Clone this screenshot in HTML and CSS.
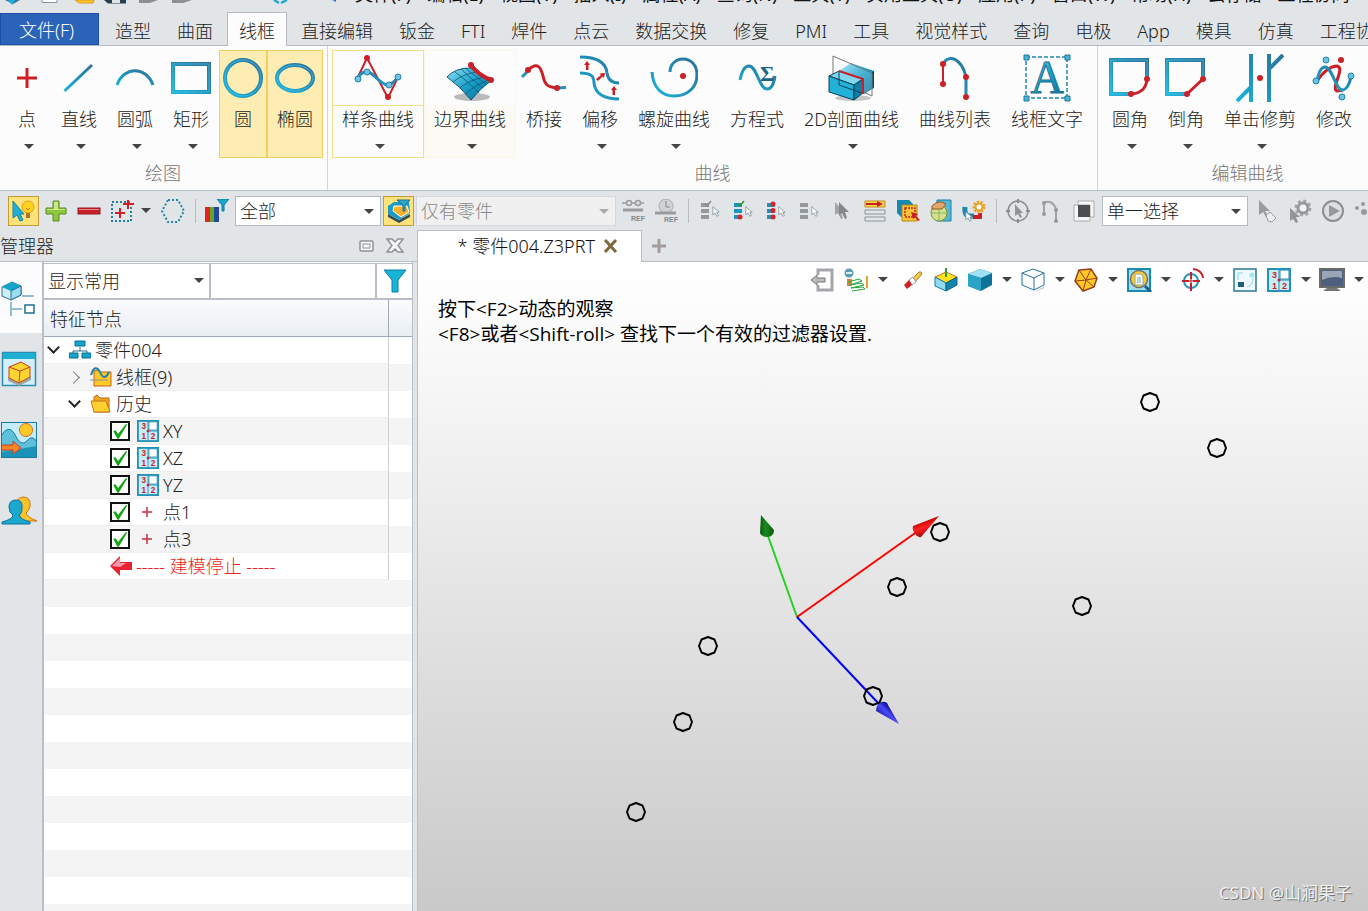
FILE: index.html
```html
<!DOCTYPE html>
<html lang="zh-CN">
<head>
  <meta charset="UTF-8">
  <meta name="viewport" content="width=device-width, initial-scale=1.0">
  <title>零件004.Z3PRT</title>
  <link rel="stylesheet" href="styles.css">
</head>
<body>
  <!-- shared gradients and symbols -->
  <svg class="defs" aria-hidden="true">
    <defs>
      <linearGradient id="tube" x1="0" y1="1" x2="1" y2="0">
        <stop offset="0" stop-color="#1cb4dc"/>
        <stop offset="0.5" stop-color="#1f8fb8"/>
        <stop offset="1" stop-color="#2f7299"/>
      </linearGradient>
      <linearGradient id="cyan" x1="0" y1="0" x2="1" y2="1">
        <stop offset="0" stop-color="#8fe0f5"/>
        <stop offset="0.5" stop-color="#1aa0c8"/>
        <stop offset="1" stop-color="#0b6a92"/>
      </linearGradient>
      <symbol id="datum" viewBox="0 0 24 24">
        <rect x="1" y="1" width="22" height="22" fill="#c5ecf7" stroke="#2590b8" stroke-width="2"/>
        <path d="M12 1V12H23M12 12V23" fill="none" stroke="#2590b8" stroke-width="1"/>
        <rect x="13" y="2" width="9" height="9" fill="#fff" stroke="#2590b8"/>
        <circle cx="12" cy="12" r="1.500" fill="#cc1f26"/>
        <text x="5" y="10" class="digit">3</text>
        <text x="5" y="21" class="digit">1</text>
        <text x="15" y="21" class="digit">2</text>
      </symbol>
      <symbol id="cursor" viewBox="0 0 10 14">
        <path d="M1 1V11L4 9L6 13L8 12L6 8H9Z"/>
      </symbol>
      <symbol id="funnel" viewBox="0 0 24 24">
        <path d="M1 1H23L15 11V23H9V11Z" fill="#17b4d8" stroke="#0b7ca5"/>
      </symbol>
    </defs>
  </svg>

  <nav class="menubar">
    <svg class="quick" width="355" height="6" viewBox="0 0 355 6">
      <path d="M5 0H20L13 4Z" fill="#3a6f9c"/><path d="M8 0H15L12 5Z" fill="#16b0dc"/>
      <path d="M42 0V2.500H57V0" fill="#fff" stroke="#7d95ad"/>
      <path d="M75 0L79 3H93L94 0Z" fill="#ffc928" stroke="#d89a1c"/>
      <path d="M104 0L108 3.500H126V0Z" fill="#24404f"/><path d="M112 0H120V3H112Z" fill="#dfe6ea"/>
      <path d="M139 0V3H150L158 0Z" fill="#8d9093"/>
      <path d="M172 0V3H183L192 0Z" fill="#8d9093"/>
      <path d="M274 0L279 3M281 3L287 0" stroke="#22a8cf" stroke-width="2.500"/>
      <path d="M332 0L336 2V0Z" fill="#3c78c8"/>
    </svg>
    <a href="#">文件(F)</a><a href="#">编辑(E)</a><a href="#">视图(V)</a><a href="#">插入(I)</a><a href="#">属性(A)</a><a href="#">查询(N)</a><a href="#">工具(T)</a><a href="#">实用工具(U)</a><a href="#">应用(P)</a><a href="#">窗口(W)</a><a href="#">帮助(H)</a><a href="#">云存储</a><a href="#">工程协同</a>
  </nav>

  <nav class="tabs">
    <button class="tab file">文件(F)</button>
    <button class="tab">造型</button>
    <button class="tab">曲面</button>
    <button class="tab active">线框</button>
    <button class="tab">直接编辑</button>
    <button class="tab">钣金</button>
    <button class="tab">FTI</button>
    <button class="tab">焊件</button>
    <button class="tab">点云</button>
    <button class="tab">数据交换</button>
    <button class="tab">修复</button>
    <button class="tab">PMI</button>
    <button class="tab">工具</button>
    <button class="tab">视觉样式</button>
    <button class="tab">查询</button>
    <button class="tab">电极</button>
    <button class="tab">App</button>
    <button class="tab">模具</button>
    <button class="tab">仿真</button>
    <button class="tab">工程协同</button>
  </nav>

  <div class="ribbon">
    <section class="group">
      <div class="tools">
        <button class="tool drop">
          <svg viewBox="0 0 48 48"><path class="red" d="M24 14V34M14 24H34"/></svg>
          <span>点</span>
        </button>
        <button class="tool drop">
          <svg viewBox="0 0 48 48"><path class="tube thin" d="M9.500 37L37 11"/></svg>
          <span>直线</span>
        </button>
        <button class="tool drop">
          <svg viewBox="0 0 48 48"><path class="tube thin" d="M6 31C13 12 35 12 42 31"/></svg>
          <span>圆弧</span>
        </button>
        <button class="tool drop">
          <svg viewBox="0 0 48 48"><rect class="tube" x="6" y="10" width="36" height="28"/><rect class="shine" x="6" y="10" width="36" height="28"/></svg>
          <span>矩形</span>
        </button>
        <button class="tool on">
          <svg viewBox="0 0 48 48"><circle class="tube" cx="24" cy="24" r="18"/><circle class="shine" cx="24" cy="24" r="18"/></svg>
          <span>圆</span>
        </button>
        <button class="tool on">
          <svg viewBox="0 0 48 48"><ellipse class="tube" cx="24" cy="24" rx="18" ry="13"/><ellipse class="shine" cx="24" cy="24" rx="18" ry="13"/></svg>
          <span>椭圆</span>
        </button>
      </div>
      <h2>绘图</h2>
    </section>

    <section class="group">
      <div class="tools">
        <button class="tool drop split">
          <svg viewBox="0 0 48 48">
            <path class="red thin" d="M3 25L13 4L34 44L44 23"/>
            <circle class="dot" cx="13" cy="4" r="3"/><circle class="dot" cx="34" cy="43" r="3"/>
            <path class="tube thin" d="M3 25C8 17 13 16 18 20C25 26 32 34 37 30C41 27 42 26 44 23"/>
            <circle class="bead" cx="4" cy="25" r="3"/><circle class="bead" cx="13" cy="18" r="3"/>
            <circle class="bead" cx="35" cy="31" r="3"/><circle class="bead" cx="44" cy="23" r="3"/>
          </svg>
          <span>样条曲线</span>
        </button>
        <button class="tool drop soft">
          <svg viewBox="0 0 48 48">
            <ellipse cx="26" cy="43" rx="18" ry="4" fill="#b9bcbe"/>
            <path d="M1 23Q9 14 24 14L45 27Q36 33 25 46Q14 32 1 23Z" fill="url(#cyan)" stroke="#0b5878"/>
            <path d="M7 28Q17 20 31 18M13 34Q24 26 37 23M19 40Q29 31 42 26M9 18Q18 24 33 39M15 15Q24 24 37 34M19 14Q29 22 41 31" fill="none" stroke="#0b5878" stroke-width="0.800"/>
            <path class="red wide" d="M25 11Q32 21 45 26"/>
            <circle class="dot" cx="25" cy="11" r="3"/><circle class="dot" cx="45" cy="26" r="3"/>
          </svg>
          <span>边界曲线</span>
        </button>
        <button class="tool">
          <svg viewBox="0 0 48 48">
            <path class="tube thin" d="M2 23L8 17M37 34L46 33.500"/>
            <path class="red" d="M8 16C18 7 21 14 23 22C25 32 29 33 37 34"/>
            <circle class="dot" cx="8" cy="16" r="3"/><circle class="dot" cx="37" cy="34" r="3"/>
          </svg>
          <span>桥接</span>
        </button>
        <button class="tool drop">
          <svg viewBox="0 0 48 48">
            <path class="tube thin" d="M4 3C22 3 30 9 31 19C32 26 36 29 43 29M4 19C15 19 18 22 18 29C19 40 29 45 43 45"/>
            <path d="M11 7L14 11H12.500V16H10V11H8ZM38 32L41 36H39V41H36.500V36H35ZM29 19L28 24L26.500 22.500L22 27L20 25L25 21L23.500 19.500Z" fill="#cc2027"/>
          </svg>
          <span>偏移</span>
        </button>
        <button class="tool drop">
          <svg viewBox="0 0 48 48">
            <path class="tube thin" d="M2 18C3 34 12 42 24 42C38 42 47 33 47 21C47 11 41 5 33 5C26 5 20 10 20 18"/>
            <circle class="dot" cx="33" cy="22" r="3"/>
          </svg>
          <span>螺旋曲线</span>
        </button>
        <button class="tool">
          <svg viewBox="0 0 48 48">
            <path class="tube thin" d="M7 26C9 16 12 12 16 12C24 12 26 35 34 35C39 35 41 29 42 22"/>
            <text x="27" y="27" class="sigma">Σ</text>
          </svg>
          <span>方程式</span>
        </button>
        <button class="tool drop">
          <svg viewBox="0 0 48 48">
            <ellipse cx="25" cy="44" rx="18" ry="3" fill="#c4c6c8"/>
            <path d="M11 17L23 9L46 17V34L36 40L11 32Z" fill="url(#cyan)"/>
            <path d="M44 18L46 17V33L44 34Z" fill="#064766"/>
            <path d="M5 2L44 19V42L5 24Z" fill="#fff" fill-opacity="0.200" stroke="#777"/>
            <path d="M1 22L11 17L35 25L26 31Z" fill="#7fd6ee" stroke="#0b3f56"/>
            <path d="M1 22L26 31V46L1 38Z" fill="#22b2d8" stroke="#0b3f56"/>
            <path d="M26 31L35 25V39L26 46Z" fill="#0d7fa8" stroke="#0b3f56"/>
            <path d="M11 18V31L34 39" fill="none" stroke="#0b3f56"/>
            <path class="red thin" d="M11 17L35 25V40"/>
          </svg>
          <span>2D剖面曲线</span>
        </button>
        <button class="tool">
          <svg viewBox="0 0 48 48">
            <path class="tube thin" d="M12 10C18 -1 31 5 35 23V42"/>
            <path class="red thin" d="M12 10V30"/>
            <circle class="dot" cx="12" cy="10" r="3"/><circle class="dot" cx="12" cy="30" r="3"/>
            <circle class="dot" cx="35" cy="23" r="3"/><circle class="dot" cx="35" cy="43" r="3"/>
          </svg>
          <span>曲线列表</span>
        </button>
        <button class="tool">
          <svg viewBox="0 0 48 48">
            <rect x="3" y="3" width="41" height="41" fill="none" stroke="#1f86ad" stroke-width="1.500" stroke-dasharray="4 2"/>
            <path d="M1 1H6V6H1ZM42 1H47V6H42ZM1 42H6V47H1ZM42 42H47V47H42Z" fill="#49b4d6" stroke="#1b789c"/>
            <text x="24" y="39" class="letter">A</text>
          </svg>
          <span>线框文字</span>
        </button>
      </div>
      <h2>曲线</h2>
    </section>

    <section class="group last">
      <div class="tools">
        <button class="tool drop">
          <svg viewBox="0 0 48 48">
            <path class="tube" d="M41 25V6H5V40H25"/><path class="shine" d="M41 25V6H5V40H25"/><path class="red" d="M41 25Q40 39 25 40"/>
            <circle class="dot" cx="41" cy="25" r="3"/><circle class="dot" cx="25" cy="40" r="3"/>
          </svg>
          <span>圆角</span>
        </button>
        <button class="tool drop">
          <svg viewBox="0 0 48 48">
            <path class="tube" d="M41 25V6H5V40H25"/><path class="shine" d="M41 25V6H5V40H25"/><path class="red" d="M41 25L25 40"/>
            <circle class="dot" cx="41" cy="25" r="3"/><circle class="dot" cx="25" cy="40" r="3"/>
          </svg>
          <span>倒角</span>
        </button>
        <button class="tool drop">
          <svg viewBox="0 0 48 48">
            <path class="tube" d="M15 0V48M33 0V48M1 47L14 34M34 14L47 1"/>
            <circle class="dot" cx="24" cy="24" r="3"/>
          </svg>
          <span>单击修剪</span>
        </button>
        <button class="tool">
          <svg viewBox="0 0 48 48">
            <path class="red" d="M7 27C14 17 21 12 27 12C36 14 20 34 27 37L33 36"/>
            <path class="tube thin" d="M7 27C9 16 12 13 15 13C22 13 26 36 32 36C37 36 40 29 41 22"/>
            <circle class="bead" cx="6" cy="27" r="3"/><circle class="bead" cx="41" cy="22" r="3"/>
            <circle class="bead" cx="16" cy="6" r="3"/><circle class="bead" cx="32" cy="43" r="3"/>
            <circle class="dot" cx="31" cy="6" r="3"/>
          </svg>
          <span>修改</span>
        </button>
      </div>
      <h2>编辑曲线</h2>
    </section>
  </div>

  <div class="toolbar">
    <button class="pick on" aria-label="提示">
      <svg viewBox="0 0 24 24"><circle cx="16" cy="8" r="6" fill="#ffd21e" stroke="#e09a1a"/><path d="M14 14H18V19H14Z" fill="#a8752a"/><path d="M14 9L16 11L18 9" fill="none" stroke="#a8752a"/><path d="M1 2V19L5 16L8 22L11 21L8 15H12Z" fill="#1fb0d4" stroke="#1583a6"/></svg>
    </button>
    <button class="pick" aria-label="添加">
      <svg viewBox="0 0 24 24"><path d="M9 2H15V9H22V15H15V22H9V15H2V9H9Z" fill="#8cc63a" stroke="#5c8a22"/><path d="M10 3H14V10H21V11H3V10H10Z" fill="#c9e88e"/></svg>
    </button>
    <button class="pick" aria-label="移除">
      <svg viewBox="0 0 24 24"><rect x="1" y="9" width="22" height="6" fill="#c8202a" stroke="#9b1a20"/><path d="M2 10.500H22" stroke="#f08a8a"/></svg>
    </button>
    <button class="pick" aria-label="框选">
      <svg viewBox="0 0 24 24"><rect x="2" y="3" width="19" height="19" fill="none" stroke="#1f7fa5" stroke-width="2" stroke-dasharray="2 2"/><path class="red thin" d="M10 9V19M5 14H15M18 1V10M13 5H24"/></svg>
    </button>
    <i class="caret wide"></i>
    <button class="pick gap" aria-label="多边形">
      <svg viewBox="0 0 24 24"><path d="M7 1H17L23 12L17 23H7L1 12Z" fill="none" stroke="#1f86a8" stroke-width="2" stroke-dasharray="2 2"/></svg>
    </button>
    <i class="sep"></i>
    <button class="pick" aria-label="颜色过滤">
      <svg viewBox="0 0 24 24"><path d="M0 8H5V23H0Z" fill="#e8211d"/><path d="M5 8H9V23H5Z" fill="#5fa82c"/><path d="M9 8H14V23H9Z" fill="#25479a"/><path d="M12 0H24L19 6V12H17V6Z" fill="#1aa6cc" stroke="#0b7ca5"/></svg>
    </button>
    <label class="combo"><select aria-label="过滤器"><option>全部</option></select></label>
    <button class="pick on" aria-label="范围">
      <svg viewBox="0 0 24 24"><path d="M1 15L12 21L23 15V18L12 24L1 18Z" fill="#3a4a58"/><path d="M1 7L7 3H22L23 14L12 21L1 15Z" fill="#1b9cc4"/><path d="M7 7H20L22 13L14 18L6 12Z" fill="#ffb32a" stroke="#fff"/><path d="M10 1H23L18 6V12H16V6Z" fill="#2fa8cc" stroke="#156c90"/></svg>
    </button>
    <label class="combo long"><select aria-label="范围" disabled><option>仅有零件</option></select></label>
    <button class="pick" aria-label="参考">
      <svg viewBox="0 0 24 24"><g fill="none" stroke="#999c9f" stroke-width="1.500"><path d="M1 4H5M11 4H14M20 4H23"/><circle cx="8" cy="4" r="2.500"/><circle cx="17" cy="4" r="2.500"/></g><path d="M2 11H22" stroke="#999c9f" stroke-width="3"/><text x="10" y="22" class="ref">REF</text></svg>
    </button>
    <button class="pick" aria-label="历史参考">
      <svg viewBox="0 0 24 24"><circle cx="12" cy="7" r="7" fill="#d0d2d4" stroke="#aaadb0"/><path d="M12 2V8H16" fill="none" stroke="#888"/><path d="M1 14H22" stroke="#999c9f" stroke-width="3"/><text x="10" y="23" class="ref">REF</text></svg>
    </button>
    <i class="sep"></i>
    <button class="pick" aria-label="全部不选"><svg viewBox="0 0 24 24"><path d="M3 4H11V8H3ZM3 10H11V14H3ZM3 16H11V20H3Z" fill="#96999c"/><path d="M7 5L9 7L13 2" fill="none" stroke="#888" stroke-width="1.500"/><use href="#cursor" x="14" y="6" width="8" height="13" class="arrow"/></svg></button>
    <button class="pick" aria-label="选择可见"><svg viewBox="0 0 24 24"><path d="M3 4H11V8H3ZM3 10H11V14H3ZM3 16H11V20H3Z" fill="#1c93ba"/><path d="M7 5L9 7L13 2" fill="none" stroke="#2f9b2f" stroke-width="1.500"/><circle cx="9" cy="18" r="2.500" fill="#d8232a"/><use href="#cursor" x="14" y="6" width="8" height="13" class="arrow"/></svg></button>
    <button class="pick" aria-label="排除"><svg viewBox="0 0 24 24"><path d="M3 4H11V8H3ZM3 10H11V14H3ZM3 16H11V20H3Z" fill="#1c93ba"/><circle cx="9" cy="5" r="2.500" fill="#d8232a"/><circle cx="9" cy="11.500" r="2.500" fill="#d8232a"/><circle cx="9" cy="18" r="2.500" fill="#d8232a"/><use href="#cursor" x="14" y="6" width="8" height="13" class="arrow"/></svg></button>
    <button class="pick" aria-label="列表"><svg viewBox="0 0 24 24"><path d="M3 4H11V8H3ZM3 10H11V14H3ZM3 16H11V20H3Z" fill="#96999c"/><use href="#cursor" x="14" y="6" width="8" height="13" class="arrow"/></svg></button>
    <button class="pick" aria-label="多选"><svg viewBox="0 0 24 24"><path d="M5 3V16L8 14L11 20L13 19L11 13H14Z" fill="#a2a5a8"/><path d="M9 3V16L12 14L15 20L17 19L15 13H19Z" fill="#85888b"/></svg></button>
    <button class="pick" aria-label="最后">
      <svg viewBox="0 0 24 24"><path d="M2 2H22V8H2Z" fill="#ffd84a" stroke="#c08c1c"/><path d="M3 4H14V2L20 5L14 8V6H3Z" fill="#c8202a"/><path d="M2 11H22V15H2ZM2 18H22V22H2Z" fill="#e2e6ea" stroke="#8a9299"/></svg>
    </button>
    <button class="pick" aria-label="窗选">
      <svg viewBox="0 0 24 24"><path d="M1 1H13L17 5V18H5L1 14Z" fill="#1588b0"/><path d="M6 6H21V22H6Z" fill="#ffc435" stroke="#b9851b"/><rect x="9" y="9" width="10" height="9" fill="none" stroke="#c8202a" stroke-width="1.500" stroke-dasharray="2 1"/><path d="M15 13L22 15L20 17L24 21L22 22L19 18L17 20Z" fill="#c8202a"/></svg>
    </button>
    <button class="pick" aria-label="面片">
      <svg viewBox="0 0 24 24"><path d="M8 1H22V22H8Z" fill="#56b8d6" stroke="#1d7fa3"/><circle cx="10" cy="14" r="8" fill="#d5e08c" stroke="#7f8f35"/><path d="M3 7Q10 0 17 5L13 10L3 10Z" fill="#e5a869" stroke="#8a5a2a"/><path d="M10 10V22M2 14H18" stroke="#7fb86a"/></svg>
    </button>
    <button class="pick" aria-label="选择设置">
      <svg viewBox="0 0 24 24"><path d="M3 8Q2 18 9 17H12" fill="none" stroke="#1c86ac" stroke-width="5"/><path d="M11 18H18V14" fill="none" stroke="#c8202a" stroke-width="4"/><circle cx="17" cy="8" r="5" fill="none" stroke="#e8a020" stroke-width="3" stroke-dasharray="2 1.500"/><circle cx="17" cy="8" r="3.500" fill="#fff" stroke="#e8a020" stroke-width="2"/><use href="#cursor" x="3" y="11" width="8" height="13" class="arrow"/></svg>
    </button>
    <i class="sep"></i>
    <button class="pick" aria-label="圆形选择">
      <svg viewBox="0 0 24 24"><circle cx="12" cy="12" r="10" fill="none" stroke="#8b8e91" stroke-width="1.500"/><path d="M12 0V4M12 20V24M0 12H4M20 12H24" stroke="#8b8e91" stroke-width="2"/><path d="M9 5V17L12 15L14 19L16 18L14 14H17Z" fill="#929598"/></svg>
    </button>
    <button class="pick" aria-label="曲线链">
      <svg viewBox="0 0 24 24"><path d="M5 15V4Q13 0 17 10V22" fill="none" stroke="#a1a4a7" stroke-width="2"/><circle cx="5" cy="15" r="2"/><circle cx="5" cy="4" r="2"/><circle cx="17" cy="11" r="2"/><circle cx="17" cy="22" r="2"/></svg>
    </button>
    <button class="pick" aria-label="反选">
      <svg viewBox="0 0 24 24"><path d="M6 2H22V18H6Z" fill="#f6f6f6" stroke="#aaa"/><path d="M2 6H18V22H2Z" fill="#f6f6f6" stroke="#aaa"/><path d="M6 6H18V18H6Z" fill="#4b4d4f"/></svg>
    </button>
    <label class="combo"><select aria-label="选择方式"><option>单一选择</option></select></label>
    <button class="pick" aria-label="标签选择">
      <svg viewBox="0 0 24 24"><path d="M4 1V16L8 13L11 18L13 17L10 12H15Z" fill="#999c9f"/><path d="M11 16L15 13L21 19L17 23L13 22Z" fill="#eee" stroke="#999"/></svg>
    </button>
    <button class="pick" aria-label="设置">
      <svg viewBox="0 0 24 24"><circle cx="15" cy="9" r="7" fill="none" stroke="#a5a8ab" stroke-width="3" stroke-dasharray="3 2.500"/><circle cx="15" cy="9" r="5" fill="#f2f2f2" stroke="#96999c" stroke-width="3"/><path d="M2 9V22L5 20L8 24L10 23L8 18H12Z" fill="#929598"/></svg>
    </button>
    <button class="pick" aria-label="播放">
      <svg viewBox="0 0 24 24"><circle cx="12" cy="12" r="10" fill="#dcdfe1" stroke="#8b8e91" stroke-width="2"/><path d="M8 6L19 12L8 18Z" fill="#96999c"/></svg>
    </button>
    <button class="pick" aria-label="更多">
      <svg viewBox="0 0 24 24"><circle cx="3" cy="9" r="2"/><circle cx="9" cy="5" r="2"/><circle cx="10" cy="13" r="3"/><circle cx="16" cy="9" r="2"/></svg>
    </button>
  </div>

  <main class="work">
    <aside class="manager">
      <header class="manager-head">
        <h1>管理器</h1>
        <button aria-label="浮动"><svg width="15" height="12" viewBox="0 0 15 12"><rect x="1" y="1" width="13" height="10" rx="1" fill="#f6f7f8" stroke="#8f9397" stroke-width="1.500"/><rect x="4" y="4" width="7" height="4" fill="none" stroke="#8f9397"/></svg></button>
        <button aria-label="关闭管理器"><svg width="18" height="15" viewBox="0 0 18 15"><path d="M1 1H6L9 4L12 1H17L12 7.500L17 14H12L9 11L6 14H1L6 7.500Z" fill="#f8f9fa" stroke="#8f9397" stroke-width="1.500"/></svg></button>
      </header>
      <div class="manager-body">
        <nav class="side">
          <button class="side-tab active" aria-label="历史管理">
            <svg viewBox="0 0 36 36"><path d="M1 7L11 2L20 6V15L10 20L1 16Z" fill="#cdeef8" stroke="#2a6f94"/><path d="M1 7L11 2L20 6L10 11Z" fill="#15a3c8"/><path d="M10 11L20 6V15L10 20Z" fill="#9bdcf0" stroke="#2a6f94"/><path d="M21 16H33M10 22V36M11 29H21" stroke="#2e7f9f" fill="none"/><rect x="24" y="25" width="9" height="8" fill="#fff" stroke="#1c6f92" stroke-width="1.500"/></svg>
          </button>
          <button class="side-tab" aria-label="装配管理">
            <svg viewBox="0 0 36 36"><rect x="1.500" y="1.500" width="33" height="33" fill="#d5effa" stroke="#2b8db1" stroke-width="1.500"/><path d="M2 2H34V8H2Z" fill="#1fb0d4"/><path d="M7 26L18 32L30 25V29L18 35L7 30Z" fill="#9aa"/><path d="M8 16L20 11L29 16V26L18 32L8 27Z" fill="#ffd52e" stroke="#c8401c"/><path d="M8 16L19 20L29 16M19 20L18 32" fill="none" stroke="#c8401c"/></svg>
          </button>
          <button class="side-tab" aria-label="视图管理">
            <svg viewBox="0 0 36 36"><rect width="36" height="36" fill="#c4ecf8"/><path d="M0 14Q7 2 13 11Q20 26 26 19Q31 12 36 20V36H0Z" fill="#5fc0dc"/><path d="M0 30L36 24V36H0Z" fill="#1c94ba"/><path d="M0 14Q7 2 13 11Q20 26 26 19Q31 12 36 20" fill="none" stroke="#1c7a9e"/><circle cx="25" cy="8" r="6.500" fill="#ffc928" stroke="#e06a1c"/><path d="M0 23H12V19L20 26L12 32V28H0Z" fill="#f8852a" stroke="#c8401c"/><rect x="0.500" y="0.500" width="35" height="35" fill="none" stroke="#1c7a9e"/></svg>
          </button>
          <button class="side-tab" aria-label="角色管理">
            <svg viewBox="0 0 36 36"><path d="M22 4Q30 4 29 13Q28 18 25 20Q26 24 36 28H22L14 16Q14 5 22 4Z" fill="#ffc22a" stroke="#c8741c"/><path d="M15 7Q22 7 21 15Q21 21 18 22Q19 26 29 29V31H1V29Q12 26 12 22Q8 20 8 14Q8 7 15 7Z" fill="#1aa8cf" stroke="#0e7498"/></svg>
          </button>
        </nav>
        <div class="panel">
          <div class="filter">
            <label class="combo flat"><select aria-label="显示"><option>显示常用</option></select></label>
            <input type="text" aria-label="搜索">
            <button aria-label="过滤"><svg width="24" height="24"><use href="#funnel"/></svg></button>
          </div>
          <div class="tree-head"><span>特征节点</span></div>
          <ul class="tree">
            <li><div class="node"><i class="chev open"></i><svg viewBox="0 0 22 22"><path d="M11 8V12M4 15V12H18V15" fill="none" stroke="#2a6f8c"/><path d="M6 2H16V7H6ZM0 14H9V19H0ZM13 14H22V19H13Z" fill="#12a5cc" stroke="#0e6f90"/></svg>零件004</div></li>
            <li><div class="node level-1"><i class="chev"></i><svg viewBox="0 0 22 22"><path d="M4 5L8 4L10 6H21V20H4Z" fill="#ffc928" stroke="#c8641c"/><path d="M1 9Q5 -3 10 6Q14 16 19 6" fill="none" stroke="#2380a6" stroke-width="2"/><path d="M0 14H18" stroke="#8a8f94"/></svg>线框(9)</div></li>
            <li><div class="node level-1"><i class="chev open"></i><svg viewBox="0 0 22 22"><path d="M4 19V4L7 2L10 5H19V19Z" fill="#f5a81c" stroke="#b8641c"/><path d="M1 8H16L20 19H4Z" fill="#ffd02e" stroke="#c8741c"/></svg>历史</div></li>
            <li><label class="node level-2"><input type="checkbox" checked><svg viewBox="0 0 24 24"><use href="#datum"/></svg>XY</label></li>
            <li><label class="node level-2"><input type="checkbox" checked><svg viewBox="0 0 24 24"><use href="#datum"/></svg>XZ</label></li>
            <li><label class="node level-2"><input type="checkbox" checked><svg viewBox="0 0 24 24"><use href="#datum"/></svg>YZ</label></li>
            <li><label class="node level-2"><input type="checkbox" checked><svg viewBox="0 0 22 22"><path d="M10 6V16M5 11H15" stroke="#c8323a" stroke-width="1.500"/></svg>点1</label></li>
            <li><label class="node level-2"><input type="checkbox" checked><svg viewBox="0 0 22 22"><path d="M10 6V16M5 11H15" stroke="#c8323a" stroke-width="1.500"/></svg>点3</label></li>
            <li><div class="node level-2 stop"><svg viewBox="0 0 22 22"><path d="M0 11L10 1V7H22V15H10V21Z" fill="#e8232f"/><path d="M2 11L10 3V8H16L10 12Z" fill="#f79ab0"/></svg>----- 建模停止 -----</div></li>
          </ul>
        </div>
      </div>
    </aside>

    <section class="document">
      <div class="doc-tabs">
        <div class="doc-tab">
          <span>* 零件004.Z3PRT</span>
          <button aria-label="关闭"><svg width="16" height="14" viewBox="0 0 16 14"><path d="M2 1L13 13M13 1L2 13" stroke="#7d6a3a" stroke-width="3"/></svg></button>
        </div>
        <button aria-label="新建"><svg width="16" height="16" viewBox="0 0 16 16"><path d="M8 1V15M1 8H15" stroke="#a49c9c" stroke-width="3"/></svg></button>
      </div>

      <div class="viewport">
        <div class="view-tools">
          <div class="view-set">
            <button aria-label="退出"><svg viewBox="0 0 24 24"><path d="M8 7V2H22V22H8V17" fill="none" stroke="#a4a7aa" stroke-width="3"/><path d="M1 12L7 7V10H15V14H7V17Z" fill="#bbb" stroke="#777"/></svg></button>
            <button aria-label="漫游"><svg viewBox="0 0 24 24"><circle cx="5" cy="5" r="4.500" fill="#5a9cb5"/><path d="M2 4H8V6H2Z" fill="#dfeef4"/><path d="M3 11H8V18H3Z" fill="#e0803a"/><path d="M4 14L15 11L18 13L6 17L17 15L20 17L7 20L19 19L21 21L8 23" fill="none" stroke="#20a83a" stroke-width="1"/><path d="M23 8V20" stroke="#e8a12a" stroke-width="2"/></svg></button>
            <i class="caret wide"></i>
          </div>
          <button aria-label="擦除"><svg viewBox="0 0 24 24"><path d="M13 10L19 4H21L22 6L15 14Z" fill="#f5c94a" stroke="#a8812a"/><path d="M9 12L13 9L16 14L12 17Z" fill="#fff" stroke="#999"/><path d="M4 17L9 12L12 17L7 21Z" fill="#c8242a"/></svg></button>
          <button aria-label="定向"><svg viewBox="0 0 24 24"><path d="M1 9L12 4L23 9L12 15Z" fill="#ffe11e" stroke="#c87a1c"/><path d="M1 9L12 15V23L1 18Z" fill="#8fdcf0" stroke="#1c7a9e"/><path d="M12 15L23 9V17L12 23Z" fill="#1583aa" stroke="#0e6484"/><path d="M12 0V9" stroke="#2f9b2f" stroke-width="2"/></svg></button>
          <button aria-label="着色"><svg viewBox="0 0 24 24"><path d="M0 6L12 1L24 5V17L13 23L0 18Z" fill="#0f7399"/><path d="M0 6L12 1L24 5L13 10Z" fill="#9fe0f2"/><path d="M0 6L13 10V23L0 18Z" fill="#2ba3c9"/></svg></button><i class="caret wide"></i>
          <button aria-label="线框显示"><svg viewBox="0 0 24 24"><path d="M5 19L13 24L23 19V20L13 24Z" fill="#aaa"/><path d="M1 5L12 1L23 5V17L13 22L1 17ZM1 5L13 10L23 5M13 10V22" fill="#fff" stroke="#23739a"/></svg></button><i class="caret wide"></i>
          <button aria-label="面片显示"><svg viewBox="0 0 24 24"><path d="M5 2L17 1L23 10L20 19L9 23L1 13Z" fill="#ffc928" stroke="#9b3a1c" stroke-width="1.500"/><path d="M5 2L12 12L17 1M12 12L23 10M12 12L20 19M12 12L9 23M12 12L1 13" fill="none" stroke="#9b3a1c"/></svg></button><i class="caret wide"></i>
          <button aria-label="缩放"><svg viewBox="0 0 24 24"><rect x="1" y="1" width="22" height="22" fill="#9edcee" stroke="#1c8ab0" stroke-width="2"/><circle cx="12" cy="11" r="8.500" fill="#ffc928" stroke="#6b7378" stroke-width="1.500"/><path d="M8 6H14L16 8V17H8Z" fill="#f6fafc" stroke="#8aa"/><path d="M10 10H14M10 12H14M10 14H14" stroke="#7aa"/><path d="M18 18L24 24" stroke="#1c5f86" stroke-width="3"/></svg></button><i class="caret wide"></i>
          <button aria-label="中心"><svg viewBox="0 0 24 24"><circle cx="11" cy="13" r="7" fill="none" stroke="#2a94ba" stroke-width="2"/><path d="M11 4V11M11 15V23M2 13H9M13 13H20M13 1Q22 2 23 10" fill="none" stroke="#c8202a" stroke-width="2"/><path d="M9 13H13M11 11V15" stroke="#c8202a"/></svg></button><i class="caret wide"></i>
          <button aria-label="对齐"><svg viewBox="0 0 24 24"><rect x="1" y="1" width="22" height="22" fill="#eefafe" stroke="#2b7590" stroke-width="1.500"/><path d="M5 12V5H10M14 19Q20 17 20 10" fill="none" stroke="#8cd0e4"/><circle cx="19" cy="7" r="2.500" fill="#a5e4f4"/><path d="M5 14H11V19H5Z" fill="#205f7a"/></svg></button>
          <button aria-label="基准面"><svg viewBox="0 0 24 24"><use href="#datum"/></svg></button><i class="caret wide"></i>
          <button aria-label="显示器"><svg viewBox="0 0 26 24"><rect x="1" y="1" width="24" height="18" fill="#4e5f7d" stroke="#6b6b6b" stroke-width="2"/><path d="M3 3H23V10Q13 7 3 12Z" fill="#9aa6b8"/><path d="M8 20H18L22 23H4Z" fill="#777"/></svg></button><i class="caret wide"></i>
        </div>
        <p class="hint">按下&lt;F2&gt;动态的观察<br>&lt;F8&gt;或者&lt;Shift-roll&gt; 查找下一个有效的过滤器设置.</p>

        <svg class="scene" viewBox="418 262 950 649">
          <defs>
            <linearGradient id="cone-g"><stop offset="0" stop-color="#0c5a10"/><stop offset="0.400" stop-color="#1b8a1f"/><stop offset="1" stop-color="#0c5a10"/></linearGradient>
            <linearGradient id="cone-r" x1="0.300" y1="0" x2="0.700" y2="1"><stop offset="0.200" stop-color="#b00000"/><stop offset="0.500" stop-color="#ff2020"/><stop offset="1" stop-color="#800000"/></linearGradient>
            <linearGradient id="cone-b" x1="1" y1="0" x2="0" y2="1"><stop offset="0.300" stop-color="#0a0a90"/><stop offset="0.500" stop-color="#4c4cf8"/><stop offset="0.800" stop-color="#0a0a90"/></linearGradient>
            <path id="pt" d="M0 -9L6.500 -6.500L9 0L6.500 6.500L0 9L-6.500 6.500L-9 0L-6.500 -6.500Z" fill="none" stroke="#000" stroke-width="2" stroke-linejoin="round"/>
          </defs>
          <g stroke-width="2">
            <path d="M797 617L768 536" stroke="#26d026"/>
            <path d="M797 617L918 531" stroke="#f00"/>
            <path d="M797 617L880 705" stroke="#00f"/>
          </g>
          <path d="M761 515L774 530Q774 536 768 537Q761 537 760 533Z" fill="url(#cone-g)"/>
          <path d="M939 516L913 526Q912 530 915 534Q918 538 921 537Z" fill="url(#cone-r)"/>
          <path d="M899 724L876 711Q876 705 881 702Q887 701 888 705Z" fill="url(#cone-b)"/>
          <use href="#pt" x="1150" y="402"/>
          <use href="#pt" x="1217" y="448"/>
          <use href="#pt" x="940" y="532"/>
          <use href="#pt" x="897" y="587"/>
          <use href="#pt" x="1082" y="606"/>
          <use href="#pt" x="708" y="646"/>
          <use href="#pt" x="873" y="696"/>
          <use href="#pt" x="683" y="722"/>
          <use href="#pt" x="636" y="812"/>
        </svg>
        <span class="watermark">CSDN @山涧果子</span>
      </div>
    </section>
  </main>
</body>
</html>
```
FILE: styles.css
```css
* {
  box-sizing: border-box;
}
body {
  display: flex;
  flex-direction: column;
  height: 100vh;
  margin: 0;
  overflow: hidden;
  background: #e1e5e8;
  color: #222;
  font: 300 18px/24px "Noto Sans", "Noto Sans CJK SC", sans-serif;
}
button {
  padding: 0;
  border: none;
  background: none;
  color: inherit;
  font: inherit;
  cursor: pointer;
}
h1, h2, p, ul {
  margin: 0;
  padding: 0;
  font: inherit;
}
svg {
  flex: none;
}
.defs {
  position: absolute;
  width: 0;
  height: 0;
}

/* icon strokes */
.tube {
  fill: none;
  stroke: url(#tube);
  stroke-width: 4;
}
.shine {
  fill: none;
  stroke: #5cc8e6;
  stroke-opacity: 0.6;
  stroke-width: 1;
}
.red {
  fill: none;
  stroke: #cc2027;
  stroke-width: 3;
}
.tube.thin {
  stroke-width: 3;
}
.red.thin {
  stroke-width: 2;
}
.red.wide {
  stroke-width: 4;
}
.dot {
  fill: #cc2027;
}
.bead {
  fill: #6cc3e2;
  stroke: #1f7fa5;
}
.digit {
  fill: #cc1f26;
  font: bold 9px "Liberation Sans", sans-serif;
}
.sigma {
  fill: #1c6485;
  font: bold 22px "Liberation Serif", serif;
}
.letter {
  fill: url(#cyan);
  stroke: #1b6f92;
  text-anchor: middle;
  font: 46px "Liberation Serif", serif;
}
.ref {
  fill: #85888b;
  font: bold 7px "Liberation Sans", sans-serif;
}
.arrow {
  fill: #fff;
  stroke: #7c8ea0;
}

/* menu bar, cut by the window top */
.menubar {
  display: flex;
  flex: none;
  align-items: flex-end;
  height: 12px;
  overflow: hidden;
}
.quick {
  align-self: flex-start;
}
.menubar a {
  flex: none;
  margin-right: 16px;
  padding-bottom: 6px;
  color: #111;
  font-weight: 400;
  text-decoration: none;
}

.tabs {
  display: flex;
  flex: none;
  height: 34px;
  border-bottom: 1px solid #b5bbc4;
}
.tab {
  flex: none;
  height: 34px;
  padding: 3px 13px 0;
}
.tab.file {
  width: 99px;
  height: 32px;
  margin: 1px 3px 0 0;
  padding: 1px 6px 0 0;
  border: 1px solid #1c4fa8;
  background: #2a63b8;
  color: #fff;
}
.tab.active {
  margin: 0 1px;
  padding: 2px 11px 0;
  border: 1px solid #b5bbc4;
  border-bottom: none;
  background: #fcfcfc;
}

.ribbon {
  display: flex;
  flex: none;
  height: 145px;
  overflow: hidden;
  border-bottom: 1px solid #b9bfc8;
  background: #fcfcfc;
}
.group {
  flex: none;
  padding: 4px 4px 0;
  border-right: 1px solid #d2d4d6;
}
.group:first-child {
  padding-left: 3px;
}
.group.last {
  width: 300px;
}
.group h2 {
  margin-top: 3px;
  color: #777;
  text-align: center;
}
.tools {
  display: flex;
}
.tool {
  display: flex;
  flex: none;
  flex-direction: column;
  align-items: center;
  min-width: 48px;
  height: 108px;
  padding: 3px 9px 0;
  border: 1px solid transparent;
  white-space: nowrap;
}
.tool svg {
  width: 48px;
  height: 48px;
  margin: 0 -12px 5px;
}
.tool.drop::after,
.caret::after,
.combo::after {
  content: "";
  border: 5px solid transparent;
  border-top-color: #444;
  border-bottom: none;
}
.tool.drop::after {
  margin: 13px 0 0 3px;
}
.tool.on {
  border-color: #f2cf5f;
  background: #fdedb3;
}
.tool.split {
  border-color: #f4dc88;
  background: linear-gradient(#f4dc88, #f4dc88) 0 54px / 100% 1px no-repeat;
}
.tool.soft {
  border-color: #fcf6e6;
  background: linear-gradient(transparent 54px, #fbfaf5 54px);
}

.toolbar {
  display: flex;
  flex: none;
  align-items: center;
  height: 39px;
  padding-left: 8px;
  overflow: hidden;
}
.pick {
  display: flex;
  flex: none;
  align-items: center;
  justify-content: center;
  width: 33px;
  height: 30px;
}
.pick svg {
  width: 24px;
  height: 24px;
  fill: #96999c;
}
.pick.on {
  width: 31px;
  border: 1px solid #c89a3a;
  background: #ffe27a;
}
.pick.gap {
  margin-left: 2px;
}
.caret {
  display: flex;
  flex: none;
  justify-content: center;
  width: 16px;
}
.sep {
  flex: none;
  width: 1px;
  height: 24px;
  margin: 0 4px 0 6px;
  background: #b9bdc2;
}
.combo {
  position: relative;
  flex: none;
  width: 146px;
  height: 30px;
  margin: 0 2px;
}
.combo::after {
  position: absolute;
  top: 13px;
  right: 7px;
  pointer-events: none;
}
.combo select {
  width: 100%;
  height: 100%;
  padding: 0 4px;
  border: 1px solid #b3bac3;
  border-radius: 0;
  outline: none;
  appearance: none;
  background: #fff;
  color: #222;
  font: inherit;
}
.combo.long {
  width: 200px;
  margin-right: 0;
}
.combo.long::after {
  border-top-color: #aaa;
}
.combo.long select {
  border-color: #d5d9dd;
  background: #f0f0f0;
  color: #888;
  opacity: 1;
}

.work {
  display: flex;
  flex: 1;
  min-height: 0;
}
.manager {
  display: flex;
  flex: none;
  flex-direction: column;
  width: 417px;
}
.manager-head {
  display: flex;
  flex: none;
  align-items: center;
  gap: 12px;
  height: 32px;
  padding-right: 13px;
  border-bottom: 1px solid #b9bfc8;
}
.manager-head h1 {
  flex: 1;
}
.manager-head button {
  display: flex;
}
.manager-body {
  display: flex;
  flex: 1;
  min-height: 0;
  padding-right: 4px;
}
.side {
  display: flex;
  flex: none;
  flex-direction: column;
  width: 44px;
  border-right: 2px solid #b9bfc8;
}
.side-tab {
  height: 71px;
  padding-right: 4px;
}
.side-tab.active {
  background: #fcfcfc;
}
.side-tab svg {
  display: block;
  width: 36px;
  height: 36px;
  margin: 0 auto;
}
.panel {
  display: flex;
  flex: 1;
  flex-direction: column;
  min-width: 0;
  border-right: 1px solid #b9bfc8;
  background: #fff;
}
.filter {
  display: flex;
  flex: none;
  height: 38px;
  padding-top: 1px;
  border-bottom: 2px solid #b9bfc8;
}
.combo.flat {
  width: 167px;
  height: 35px;
  margin: 0;
}
.combo.flat::after {
  top: 15px;
}
.combo.flat select,
.filter input,
.filter button {
  height: 35px;
  border: none;
  border-top: 1px solid #b9bfc8;
  border-right: 2px solid #b9bfc8;
}
.filter input {
  flex: 1;
  min-width: 0;
  padding: 0 4px;
  outline: none;
  font: inherit;
}
.filter button {
  width: 35px;
  padding: 4px 0 0;
  border-right: none;
}
.tree-head {
  flex: none;
  height: 37px;
  padding-right: 23px;
  border-bottom: 1px solid #9fa9b5;
  background: linear-gradient(#fafbfd, #e9eef3);
}
.tree-head span {
  display: block;
  height: 36px;
  padding-left: 6px;
  border-right: 1px solid #9fa9b5;
  line-height: 38px;
}
.tree {
  flex: 1;
  min-height: 0;
  overflow: hidden;
  list-style: none;
  background: repeating-linear-gradient(#fff 0 27px, #f4f4f4 27px 54px);
}
.tree li {
  padding-right: 23px;
}
.node {
  display: flex;
  align-items: center;
  height: 27px;
  padding-left: 2px;
  border-right: 1px solid #ccd1d7;
  border-bottom: 1px solid #eee;
}
.node.level-1 {
  padding-left: 23px;
}
.node.level-2 {
  padding-left: 66px;
}
.node svg {
  width: 22px;
  height: 22px;
  margin-right: 4px;
}
.chev {
  flex: none;
  width: 9px;
  height: 9px;
  margin: 0 12px 0 2px;
  border: solid #777;
  border-width: 1px 1px 0 0;
  transform: rotate(45deg);
}
.chev.open {
  margin: -6px 11px 0 3px;
  border-color: #222;
  border-width: 2px 2px 0 0;
  transform: rotate(135deg);
}
.node input {
  width: 20px;
  height: 20px;
  margin: 0 7px 0 0;
  border: 2px solid #111;
  appearance: none;
  background: #fff;
}
.node input:checked::after {
  content: "";
  display: block;
  height: 16px;
  background: #12a512;
  clip-path: polygon(8% 50%, 22% 46%, 38% 68%, 86% 8%, 96% 8%, 42% 98%, 34% 98%);
}
.node.stop {
  color: #ee1c24;
}

.document {
  display: flex;
  flex: 1;
  flex-direction: column;
  min-width: 0;
}
.doc-tabs {
  display: flex;
  flex: none;
  align-items: center;
  gap: 9px;
  height: 32px;
  border-bottom: 1px solid #b9bfc8;
}
.doc-tabs button {
  display: flex;
}
.doc-tab {
  display: flex;
  align-items: center;
  justify-content: flex-end;
  gap: 8px;
  width: 225px;
  height: 32px;
  padding-right: 22px;
  border: 1px solid #b9bfc8;
  border-bottom: none;
  background: #fff;
  color: #111;
}
.viewport {
  position: relative;
  flex: 1;
  overflow: hidden;
  border-left: 1px solid #b9bfc8;
  background: linear-gradient(#fff, #fcfcfc 8%, #c9c9c9);
}
.view-tools {
  display: flex;
  align-items: center;
  justify-content: flex-end;
  height: 35px;
}
.view-set {
  display: flex;
  align-items: center;
  margin-right: 3px;
}
.view-tools button {
  flex: none;
  width: 34px;
  height: 24px;
}
.view-tools svg {
  display: block;
  width: 26px;
  height: 24px;
  margin: 0 auto;
}
.view-tools .caret {
  width: 19px;
}
.hint {
  padding-left: 20px;
  color: #000;
  font: 400 19px/25px "Open Sans", "Noto Sans CJK SC", sans-serif;
}
.scene {
  position: absolute;
  inset: 0;
  width: 100%;
  height: 100%;
  pointer-events: none;
}
.watermark {
  position: absolute;
  right: 16px;
  bottom: 6px;
  color: #efefef;
  font-size: 17px;
  font-weight: 400;
  text-shadow: 1px 1px 0 #777;
}
```
